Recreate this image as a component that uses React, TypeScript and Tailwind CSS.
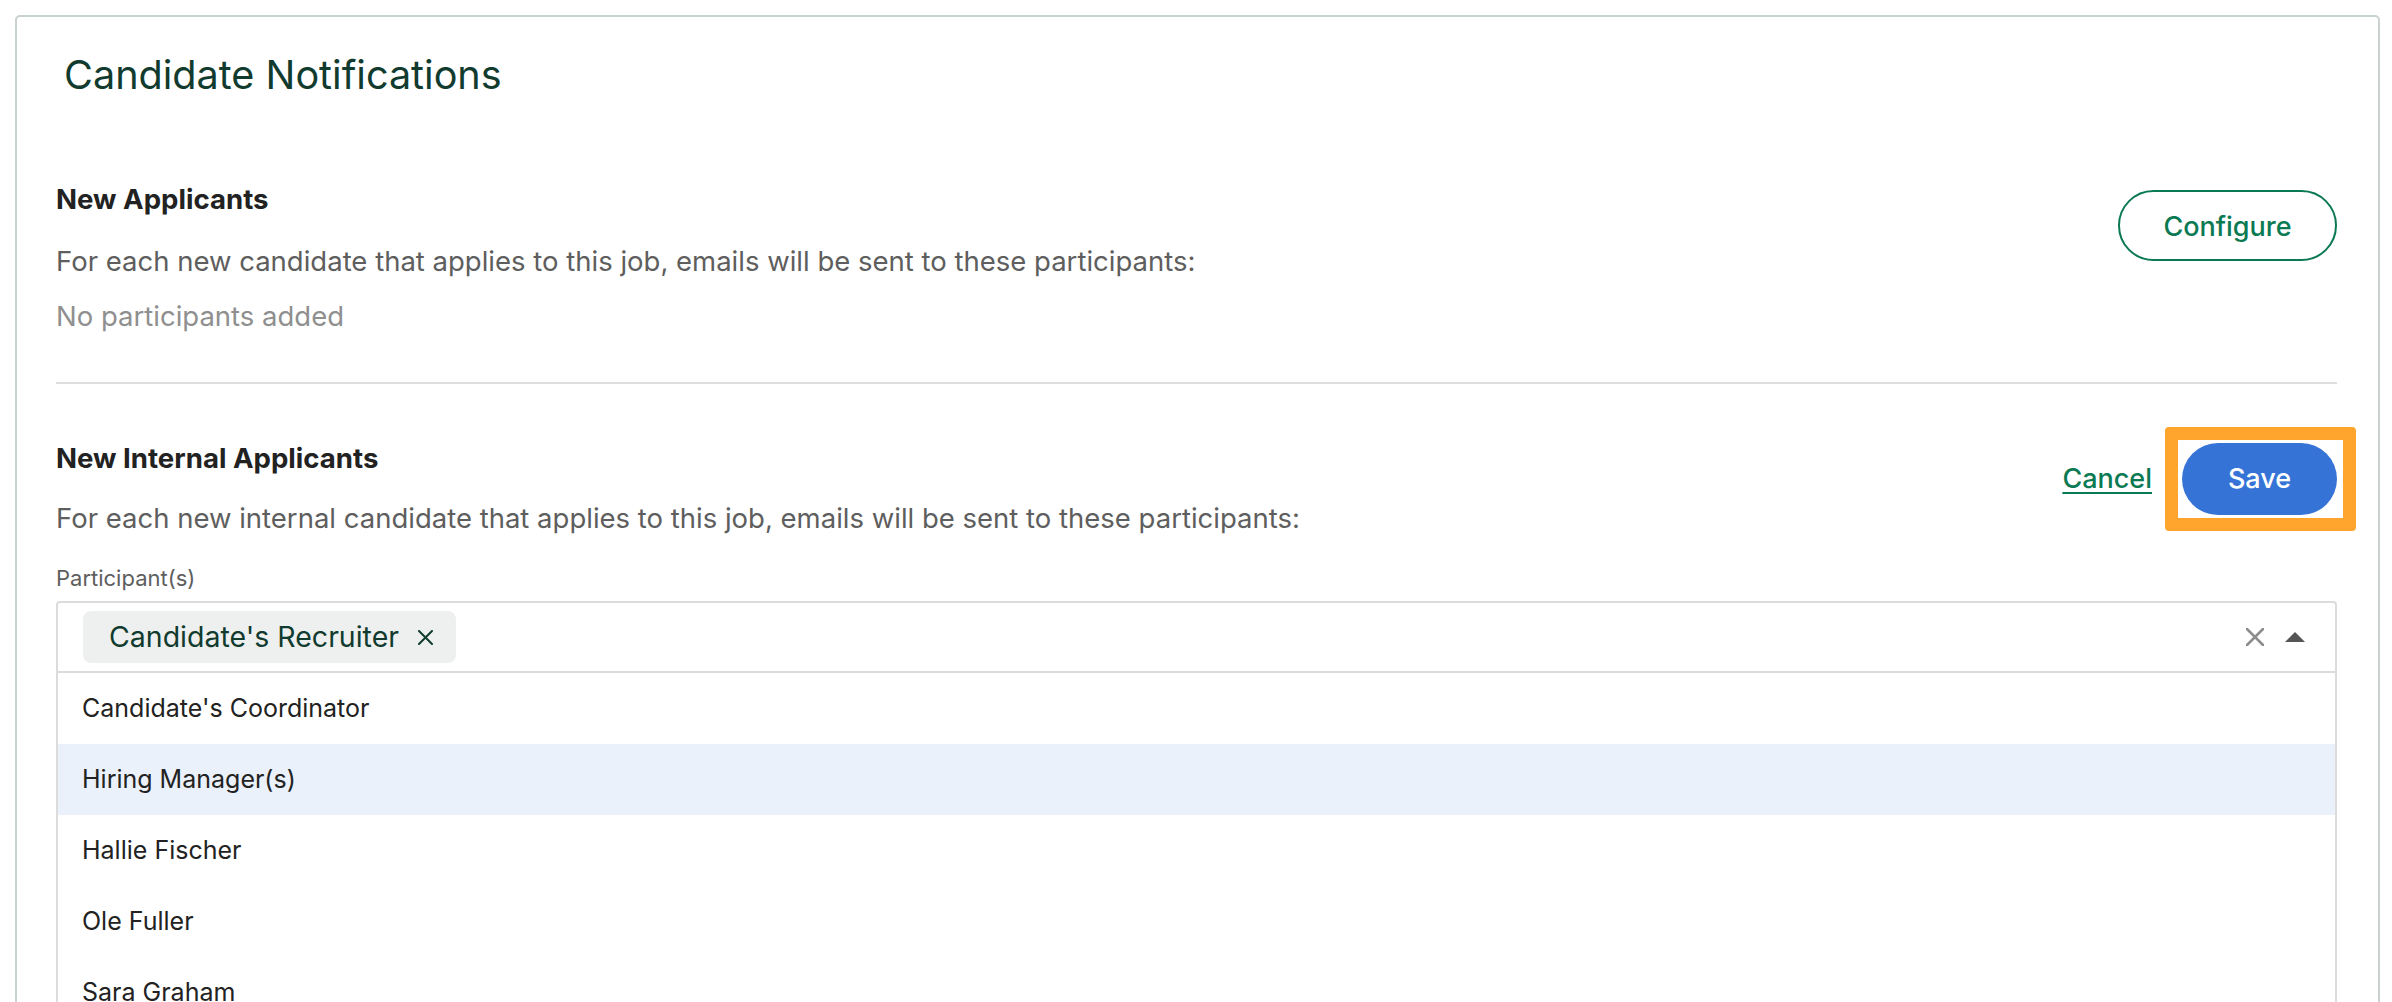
const options = [
  "Candidate's Coordinator",
  "Hiring Manager(s)",
  "Hallie Fischer",
  "Ole Fuller",
  "Sara Graham",
];

function Cross({ size, stroke, color }: { size: number; stroke: number; color: string }) {
  return (
    <svg width={size} height={size} viewBox={`0 0 ${size} ${size}`} fill="none">
      <path
        d={`M1 1L${size - 1} ${size - 1}M${size - 1} 1L1 ${size - 1}`}
        stroke={color}
        strokeWidth={stroke}
        strokeLinecap="round"
      />
    </svg>
  );
}

export default function App() {
  return (
    <div className="h-[1002px] overflow-hidden bg-white pl-[15px] pr-[12px] pt-[15px] font-['Inter',sans-serif]">
      <div className="min-h-[1100px] rounded-t-[5px] border-2 border-[#c9d2ce] pl-[39px] pr-[41px] pt-[34px]">
        <h1 className="ml-[8px] text-[39.6px] leading-[48px] text-[#113b2e]">Candidate Notifications</h1>

        <section className="mt-[84px] flex items-start justify-between">
          <div>
            <h2 className="text-[27.6px] font-bold leading-[32px] text-[#222222]">New Applicants</h2>
            <p className="mt-[30px] text-[27.5px] leading-[32px] text-[#5e5e5e]">
              For each new candidate that applies to this job, emails will be sent to these participants:
            </p>
            <p className="mt-[23px] text-[27.5px] leading-[32px] text-[#8f8f8f]">No participants added</p>
          </div>
          <button className="mt-[7px] h-[71px] w-[219px] rounded-full border-2 border-[#0b7a53] pt-[3px] text-[27px] font-medium text-[#0b7a53]">
            Configure
          </button>
        </section>

        <div className="mt-[50px] h-[2px] bg-[#dddddd]" />

        <section className="mt-[58px]">
          <div className="flex items-start justify-between">
            <div>
              <h2 className="text-[27.6px] font-bold leading-[32px] text-[#222222]">New Internal Applicants</h2>
              <p className="mt-[28px] text-[27.5px] leading-[32px] text-[#5e5e5e]">
                For each new internal candidate that applies to this job, emails will be sent to these participants:
              </p>
            </div>
            <div className="-mr-[19px] -mt-[15px] flex items-center gap-[13px]">
              <a href="#" className="text-[27px] font-medium text-[#0b7a53] underline underline-offset-4">
                Cancel
              </a>
              <div className="rounded-[4px] border-[13px] border-[#ffa42c] py-[3px] pl-[4px] pr-[6px]">
                <button className="h-[72px] w-[155px] rounded-full bg-[#3574d6] text-[27px] font-medium text-white">
                  Save
                </button>
              </div>
            </div>
          </div>

          <label className="mt-[29px] block text-[22px] leading-[30px] text-[#5e5e5e]">Participant(s)</label>

          <div className="mt-[8px] rounded-t-[4px] border-2 border-[#dcdcdc]">
            <div className="flex h-[68px] items-center pl-[25px] pr-[30px]">
              <span className="flex h-[52px] items-center gap-[19px] rounded-[8px] bg-[#eef0ef] pl-[26px] pr-[23px] text-[28.5px] text-[#113b2e]">
                Candidate's Recruiter
                <Cross size={15} stroke={2} color="#113b2e" />
              </span>
              <span className="ml-auto flex items-center gap-[21px]">
                <Cross size={18} stroke={2.5} color="#8c8c8c" />
                <svg width="20" height="10" viewBox="0 0 20 10">
                  <polygon points="10,0 20,10 0,10" fill="#555555" />
                </svg>
              </span>
            </div>
            <ul className="border-t-2 border-[#dcdcdc]">
              {options.map((o, i) => (
                <li
                  key={o}
                  className={`flex h-[71px] items-center pl-[24px] text-[25px] text-[#222222] ${
                    i === 1 ? "bg-[#ebf1fa]" : ""
                  }`}
                >
                  {o}
                </li>
              ))}
            </ul>
          </div>
        </section>
      </div>
    </div>
  );
}
